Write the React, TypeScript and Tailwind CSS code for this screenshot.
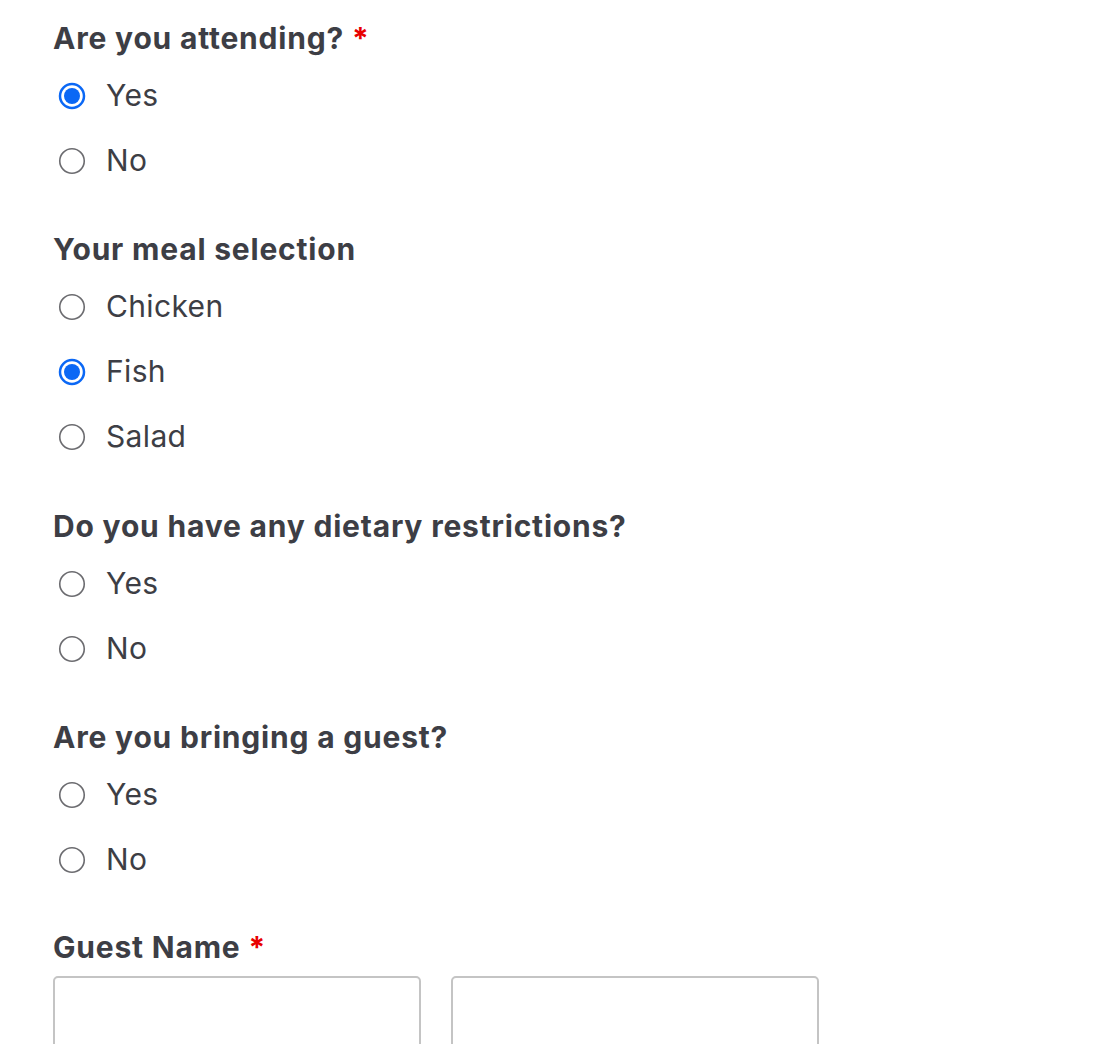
import React from "react";

const font = { fontFamily: '"Inter", "Liberation Sans", sans-serif' };

function Radio({ checked }: { checked?: boolean }) {
  return (
    <svg width="28" height="28" viewBox="0 0 28 28" className="shrink-0">
      {checked ? (
        <>
          <circle cx="14" cy="14" r="12" fill="white" stroke="#0b68f5" strokeWidth="2.5" />
          <circle cx="14" cy="14" r="8" fill="#0b68f5" />
        </>
      ) : (
        <circle cx="14" cy="14" r="12.25" fill="white" stroke="#6c6c70" strokeWidth="1.6" />
      )}
    </svg>
  );
}

function Heading({ title, required }: { title: string; required?: boolean }) {
  return (
    <div className="h-[34px] leading-[34px] text-[30px] font-bold tracking-[0.8px] text-[#3d3e45]">
      {title}
      {required && <span className="text-[#e80000] ml-[8px]">*</span>}
    </div>
  );
}

function Group({
  title,
  required,
  options,
  selected,
  mb = "mb-[39px]",
}: {
  title: string;
  required?: boolean;
  options: string[];
  selected?: number;
  mb?: string;
}) {
  return (
    <div className={mb}>
      <Heading title={title} required={required} />
      <div className="mt-[8px]">
        {options.map((o, i) => (
          <div key={o} className="h-[65px] flex items-center">
            <div className="ml-[5px]">
              <Radio checked={selected === i} />
            </div>
            <span className="ml-[20px] text-[30px] tracking-[0.35px] text-[#3d3e45]">{o}</span>
          </div>
        ))}
      </div>
    </div>
  );
}

export default function App() {
  return (
    <div className="w-[1116px] h-[1044px] bg-white overflow-hidden pl-[53px] pt-[21px]" style={font}>
      <Group title="Are you attending?" required options={["Yes", "No"]} selected={0} />
      <Group title="Your meal selection" options={["Chicken", "Fish", "Salad"]} selected={1} mb="mb-[40px]" />
      <Group title="Do you have any dietary restrictions?" options={["Yes", "No"]} />
      <Group title="Are you bringing a guest?" options={["Yes", "No"]} mb="mb-[38px]" />
      <Heading title="Guest Name" required />
      <div className="mt-[12px] flex gap-[30px]">
        <div className="w-[368px] h-[120px] border-2 border-[#c4c4c4] rounded-[5px]" />
        <div className="w-[368px] h-[120px] border-2 border-[#c4c4c4] rounded-[5px]" />
      </div>
    </div>
  );
}
